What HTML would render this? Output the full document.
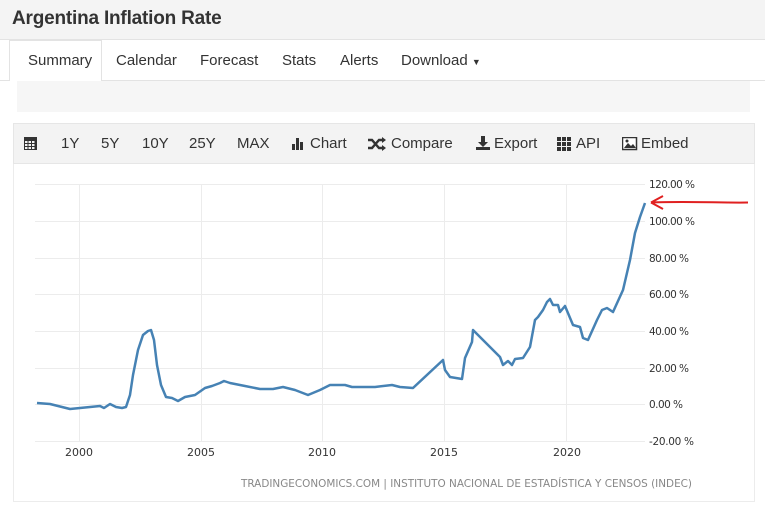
<!DOCTYPE html>
<html><head><meta charset="utf-8"><style>
body{margin:0;width:765px;height:521px;background:#fff;font-family:"Liberation Sans",Arial,sans-serif;position:relative;overflow:hidden}
.hdr{position:absolute;left:0;top:0;width:765px;height:39px;background:#f4f4f4;border-bottom:1px solid #e3e3e3}
.hdr h1{margin:0;position:absolute;left:12px;top:8px;font-size:19px;font-weight:bold;color:#333;letter-spacing:-0.2px}
.tabs{position:absolute;left:0;top:40px;width:765px;height:40px;border-bottom:1px solid #e3e3e3}
.tab{position:absolute;top:11px;font-size:15px;color:#333}
.act{position:absolute;left:9px;top:40px;width:93px;height:41px;background:#fff;border:1px solid #e3e3e3;border-bottom:none;box-sizing:border-box}
.gbox{position:absolute;left:17px;top:81px;width:733px;height:31px;background:#f6f6f6}
.tb{position:absolute;left:13px;top:123px;width:742px;height:41px;background:#f3f3f3;border:1px solid #e6e6e6;box-sizing:border-box}
.ti{position:absolute;top:135px;font-size:15px;color:#333}
.chart{position:absolute;left:13px;top:164px;width:742px;height:338px;border:1px solid #ececec;border-top:none;box-sizing:border-box}
</style></head><body>
<div class="hdr"><h1>Argentina Inflation Rate</h1></div>
<div class="tabs"></div>
<div class="act"></div>
<span class="tab" style="left:28px;top:52px">Summary</span>
<span class="tab" style="left:116px;top:52px">Calendar</span>
<span class="tab" style="left:200px;top:52px">Forecast</span>
<span class="tab" style="left:282px;top:52px">Stats</span>
<span class="tab" style="left:340px;top:52px">Alerts</span>
<span class="tab" style="left:401px;top:52px">Download <span style="font-size:9px">▼</span></span>
<div class="gbox"></div>
<div class="tb"></div>
<svg style="position:absolute;left:23px;top:136px" width="16" height="15"><rect x="1" y="1" width="13" height="13" fill="#333"/><g fill="#f3f3f3"><rect x="2" y="5" width="2.5" height="2"/><rect x="5.5" y="5" width="2.5" height="2"/><rect x="9" y="5" width="2.5" height="2"/><rect x="2" y="8" width="2.5" height="2"/><rect x="5.5" y="8" width="2.5" height="2"/><rect x="9" y="8" width="2.5" height="2"/><rect x="2" y="11" width="2.5" height="2"/><rect x="5.5" y="11" width="2.5" height="2"/><rect x="9" y="11" width="2.5" height="2"/></g></svg>
<span class="ti" style="left:61px">1Y</span>
<span class="ti" style="left:101px">5Y</span>
<span class="ti" style="left:142px">10Y</span>
<span class="ti" style="left:189px">25Y</span>
<span class="ti" style="left:237px">MAX</span>
<svg style="position:absolute;left:291px;top:137px" width="16" height="14"><rect x="1" y="7" width="3" height="6" fill="#333"/><rect x="5" y="1" width="3" height="12" fill="#333"/><rect x="9" y="5" width="3" height="8" fill="#333"/></svg>
<span class="ti" style="left:310px">Chart</span>
<svg style="position:absolute;left:367px;top:137px" width="20" height="14" fill="none" stroke="#333" stroke-width="2.4"><path d="M1 3h4l7 8h5M1 11h4l7-8h5"/><path d="M15 0l4 3-4 3zM15 8l4 3-4 3z" fill="#333" stroke="none"/></svg>
<span class="ti" style="left:391px">Compare</span>
<svg style="position:absolute;left:475px;top:135px" width="16" height="16"><path d="M6 1h4v6h3l-5 5-5-5h3z" fill="#333"/><rect x="1" y="12" width="14" height="3" fill="#333"/></svg>
<span class="ti" style="left:494px">Export</span>
<svg style="position:absolute;left:557px;top:137px" width="15" height="14" fill="#333"><rect x="0" y="0" width="4" height="4"/><rect x="5" y="0" width="4" height="4"/><rect x="10" y="0" width="4" height="4"/><rect x="0" y="5" width="4" height="4"/><rect x="5" y="5" width="4" height="4"/><rect x="10" y="5" width="4" height="4"/><rect x="0" y="10" width="4" height="4"/><rect x="5" y="10" width="4" height="4"/><rect x="10" y="10" width="4" height="4"/></svg>
<span class="ti" style="left:576px">API</span>
<svg style="position:absolute;left:622px;top:137px" width="16" height="14"><rect x="0.5" y="0.5" width="14" height="12" fill="#fff" stroke="#333" stroke-width="1.5"/><path d="M2 11l4-5 3 3 2-2 3 4z" fill="#333"/><circle cx="5" cy="4" r="1.5" fill="#333"/></svg>
<span class="ti" style="left:641px">Embed</span>
<div class="chart"></div>
<svg style="position:absolute;left:0;top:0" width="765" height="521">
<g stroke="#ececec" stroke-width="1">
<path d="M35 184.5H645M35 221.5H645M35 258.5H645M35 294.5H645M35 331.5H645M35 368.5H645M35 404.5H645M35 441.5H645"/>
<path d="M79.5 184V441M201.5 184V441M322.5 184V441M444.5 184V441M566.5 184V441"/>
</g>
<g font-family="DejaVu Sans,sans-serif" font-size="10.5" fill="#333">
<text x="649" y="188" textLength="46">120.00 %</text><text x="649" y="225" textLength="46">100.00 %</text><text x="649" y="262" textLength="40">80.00 %</text>
<text x="649" y="298" textLength="40">60.00 %</text><text x="649" y="335" textLength="40">40.00 %</text><text x="649" y="372" textLength="40">20.00 %</text>
<text x="649" y="408" textLength="34">0.00 %</text><text x="649" y="445" textLength="45">-20.00 %</text>
<g text-anchor="middle" font-size="11"><text x="79" y="456">2000</text><text x="201" y="456">2005</text><text x="322" y="456">2010</text><text x="444" y="456">2015</text><text x="567" y="456">2020</text></g>
<text x="241" y="487" textLength="451" lengthAdjust="spacingAndGlyphs" font-size="11" fill="#888">TRADINGECONOMICS.COM | INSTITUTO NACIONAL DE ESTADÍSTICA Y CENSOS (INDEC)</text>
</g>
<polyline fill="none" stroke="#4682b4" stroke-width="2.5" stroke-linejoin="round" points="37,403 50,404 62,407 70,409 90,407 100,406 104,408 110,404 116,407 122,408 126,407 130,395 133,375 138,350 143,335 148,331 151,330 154,340 157,365 161,385 166,397 172,398 178,401 185,397 195,395 205,388 212,386 220,383 224,381 230,383 245,386 260,389 273,389 283,387 295,390 308,395 320,390 330,385 345,385 352,387 375,387 392,385 400,387 413,388 443,360 445,370 450,377 462,379 465,358 472,342 473,330 500,357 503,365 508,361 512,365 515,359 523,358 530,347 535,320 538,317 543,310 547,302 550,299 553,305 558,305 560,312 565,306 573,325 580,327 583,338 588,340 597,320 602,310 607,308 613,312 623,290 630,260 635,233 640,217 645,203"/>
<path d="M748 202.5C720 203 690 201 651 202.5M651 202.5L663 196M651 202.5L663 209" stroke="#e02020" stroke-width="2" fill="none"/>
</svg>
</body></html>
